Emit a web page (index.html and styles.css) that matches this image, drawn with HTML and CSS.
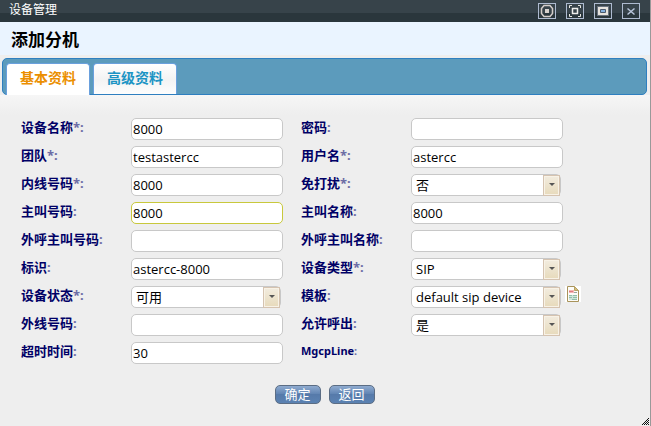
FILE: index.html
```html
<!DOCTYPE html>
<html lang="zh-CN">
<head>
<meta charset="utf-8">
<title>设备管理</title>
<link rel="stylesheet" href="styles.css">
</head>
<body>
<div class="window">
  <header class="titlebar">
    <span class="title">设备管理</span>
    <div class="controls">
      <button type="button" class="control" aria-label="最小化"><svg viewBox="0 0 16 14"><path d="M5 1.500h6l2.500 3v5l-2.500 3H5l-2.500-3v-5z" fill="none" stroke="#d4cdca" stroke-width="1.500"/><path d="M6 5h4v4H6z" fill="#d8d2ce"/></svg></button>
      <button type="button" class="control" aria-label="全屏"><svg viewBox="0 0 16 14"><path d="M2.500 4V1.500H5M11 1.500h2.500V4M13.500 10v2.500H11M5 12.500H2.500V10" fill="none" stroke="#e6e6e0"/><path d="M5.500 4.500h5v5h-5z" fill="none" stroke="#eeeeec" stroke-width="1.500"/></svg></button>
      <button type="button" class="control" aria-label="还原"><svg viewBox="0 0 16 14"><path d="M2 2h12v10H2z" fill="#68717d"/><path d="M3 3h10v8H3z" fill="#e6e3de"/><path d="M5.500 5.500h5v3h-5z" fill="#83b1df" stroke="#4a596c"/></svg></button>
      <button type="button" class="control" aria-label="关闭"><svg viewBox="0 0 16 14"><path d="M4.500 4.500l7 6M11.500 4.500l-7 6" fill="none" stroke="#b9c6db" stroke-width="1.500"/></svg></button>
    </div>
  </header>
  <h1 class="heading">添加分机</h1>
  <nav class="tabs">
    <a class="tab active" href="#basic">基本资料</a>
    <a class="tab" href="#advanced">高级资料</a>
  </nav>
  <form class="form" id="basic">
    <div class="fields">
      <label for="name">设备名称<i>*:</i></label>
      <div class="cell"><input id="name" type="text" value="8000"></div>
      <label for="secret">密码<i>:</i></label>
      <div class="cell"><input id="secret" type="text"></div>

      <label for="team">团队<i>*:</i></label>
      <div class="cell"><input id="team" type="text" value="testastercc"></div>
      <label for="user">用户名<i>*:</i></label>
      <div class="cell"><input id="user" type="text" value="astercc"></div>

      <label for="ext">内线号码<i>*:</i></label>
      <div class="cell"><input id="ext" type="text" value="8000"></div>
      <label for="dnd">免打扰<i>*:</i></label>
      <div class="cell"><span class="picker"><select id="dnd"><option>否</option></select></span></div>

      <label for="cid">主叫号码<i>:</i></label>
      <div class="cell"><input id="cid" class="current" type="text" value="8000"></div>
      <label for="cname">主叫名称<i>:</i></label>
      <div class="cell"><input id="cname" type="text" value="8000"></div>

      <label for="ocid">外呼主叫号码<i>:</i></label>
      <div class="cell"><input id="ocid" type="text"></div>
      <label for="ocname">外呼主叫名称<i>:</i></label>
      <div class="cell"><input id="ocname" type="text"></div>

      <label for="ident">标识<i>:</i></label>
      <div class="cell"><input id="ident" type="text" value="astercc-8000"></div>
      <label for="type">设备类型<i>*:</i></label>
      <div class="cell"><span class="picker"><select id="type"><option>SIP</option></select></span></div>

      <label for="status">设备状态<i>*:</i></label>
      <div class="cell"><span class="picker"><select id="status"><option>可用</option></select></span></div>
      <label for="template">模板<i>:</i></label>
      <div class="cell"><span class="picker"><select id="template"><option>default sip device</option></select></span>
        <button type="button" class="doc" aria-label="查看模板"><svg viewBox="0 0 16 16"><path d="M0 0h16v16H0z" fill="#fff"/><path d="M2.500.5h7l4 4v11h-11z" fill="#fdfcf8" stroke="#a8935a"/><path d="M9.500.5v4h4z" fill="#d4bd79" stroke="#b6a267"/><path d="M4 4h5v3H4z" fill="#f3b4b4"/><path d="M4 5.500h4" stroke="#e07a80"/><path d="M4 9h8v5H4z" fill="#cfe4da"/><path d="M4 9.500h3M8 9.500h4M4 11.500h3M8 11.500h4M7 13.500h5" stroke="#8fbfa9"/><path d="M9 6.500h3" stroke="#9aa39e"/></svg></button></div>

      <label for="line">外线号码<i>:</i></label>
      <div class="cell"><input id="line" type="text"></div>
      <label for="allow">允许呼出<i>:</i></label>
      <div class="cell"><span class="picker"><select id="allow"><option>是</option></select></span></div>

      <label for="timeout">超时时间<i>:</i></label>
      <div class="cell"><input id="timeout" type="text" value="30"></div>
      <span class="label latin">MgcpLine<i>:</i></span>
    </div>
    <div class="actions">
      <button type="button" class="action">确定</button>
      <button type="button" class="action">返回</button>
    </div>
  </form>
  <svg class="grip" viewBox="0 0 8 8" aria-hidden="true"><path d="M6 0h1v1H6zM5 1h1v1H5zM4 2h1v1H4zM6 2h1v1H6zM3 3h1v1H3zM5 3h1v1H5zM2 4h1v1H2zM4 4h1v1H4zM6 4h1v1H6zM1 5h1v1H1zM3 5h1v1H3zM5 5h1v1H5zM0 6h1v1H0zM2 6h1v1H2zM4 6h1v1H4zM6 6h1v1H6z" fill="#111"/></svg>
</div>
</body>
</html>
```
FILE: styles.css
```css
* {
  box-sizing: border-box;
}

body {
  margin: 0;
  background: #eee;
  color: #000;
  font: 12px/16px "Noto Sans", "Noto Sans CJK SC", sans-serif;
}

.window {
  position: relative;
  min-height: 100vh;
  border-right: 1px solid #999;
}

.titlebar {
  display: flex;
  align-items: flex-start;
  justify-content: space-between;
  height: 22px;
  padding: 2px 10px 0 9px;
  background: linear-gradient(#37434a 13px, #2a363c 13px);
  color: #fff;
}

.controls {
  display: flex;
  gap: 10px;
  padding-top: 1px;
}

.control {
  width: 18px;
  height: 16px;
  padding: 0;
  border: 1px solid #aebbd0;
  background: transparent;
}

svg {
  display: block;
  width: 100%;
  height: 100%;
}

.heading {
  margin: 0;
  padding: 8px 11px 5px;
  background: #eaf4ff;
  font-size: 17px;
  line-height: 20px;
}

.tabs {
  display: flex;
  gap: 3px;
  margin: 3px 3px 0 2px;
  padding: 4px 3px 0;
  border: 1px solid #2e7fc0;
  border-radius: 5px;
  background: #5c9bbc;
}

.tab {
  height: 31px;
  padding: 0 13px;
  border: 1px solid #6aa0dd;
  border-bottom: 0;
  border-radius: 4px 4px 0 0;
  background: linear-gradient(#fff, #f3f3f3 50%, #fdfdfd);
  color: #1c94c4;
  font-size: 14px;
  font-weight: bold;
  line-height: 28px;
  text-decoration: none;
}

.tab.active {
  height: 32px;
  margin-bottom: -1px;
  background: #fff;
  color: #eb8f00;
}

.form {
  padding: 20px 22px 0 21px;
  background: linear-gradient(#f6f6f6, #eee 20px);
}

.fields {
  display: grid;
  grid-template-columns: 110px 170px 110px 1fr;
  grid-auto-rows: 28px;
  align-items: center;
}

label,
.label {
  padding-bottom: 4px;
  color: #006;
  font-size: 13px;
  font-weight: bold;
  white-space: nowrap;
}

.latin {
  font-size: 11px;
}

i {
  color: #6c6ca5;
  font-style: normal;
}

.cell {
  display: flex;
  gap: 4px;
}

input,
select {
  height: 22px;
  margin: 0;
  border: 1px solid #c8c8c8;
  border-radius: 5px;
  outline: 0;
  background: #fff;
  color: #000;
  font: 13px "Open Sans", "Noto Sans CJK SC", sans-serif;
}

input {
  width: 152px;
  padding: 0 1px;
}

input.current {
  border-color: #c8c83c;
}

select {
  width: 150px;
  padding: 0 4px;
  appearance: none;
}

.picker {
  position: relative;
}

.picker::before {
  position: absolute;
  top: 1px;
  right: 1px;
  width: 15px;
  height: 19px;
  border: 1px solid #d5c3b0;
  background: linear-gradient(#f2ecdf, #e7dabb);
  box-shadow: inset 0 0 0 1px #f8f2e6;
  content: "";
  pointer-events: none;
}

.picker::after {
  position: absolute;
  top: 9px;
  right: 6px;
  border: 3px solid transparent;
  border-top-color: #555;
  border-bottom: 0;
  content: "";
  pointer-events: none;
}

.doc {
  width: 16px;
  height: 16px;
  padding: 0;
  border: 0;
  background: transparent;
}

.actions {
  display: flex;
  justify-content: center;
  gap: 8px;
  padding-top: 18px;
}

.action {
  width: 46px;
  height: 19px;
  padding: 0;
  border: 1px solid #5b6d84;
  border-radius: 5px;
  background: linear-gradient(#8fabd0, #6386b4 45%, #567aaa 50%, #5b82b2);
  color: #fff;
  font: 13px/17px "Noto Sans", "Noto Sans CJK SC", sans-serif;
}

.grip {
  position: absolute;
  right: 0;
  bottom: 0;
  width: 8px;
  height: 8px;
}
```
